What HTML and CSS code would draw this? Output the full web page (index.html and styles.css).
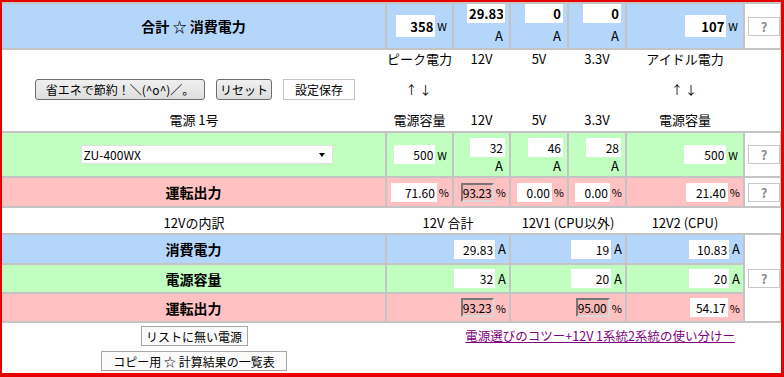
FILE: index.html
```html
<!DOCTYPE html>
<html lang="ja">
<head>
<meta charset="utf-8">
<title>電源容量計算</title>
<link rel="stylesheet" href="styles.css">
</head>
<body>
<div class="frame">
<table class="calc">
<colgroup><col class="c1"><col class="c2"><col class="c3"><col class="c4"><col class="c5"><col class="c6"><col class="c7"></colgroup>
<tr class="band blue first r1">
  <th class="lbl">合計 ☆ 消費電力</th>
  <td class="val"><input class="num b tall w39" value="358"><span class="u">W</span></td>
  <td class="amp"><input class="num b w38" value="29.83"><div class="ua">A</div></td>
  <td class="amp"><input class="num b w38" value="0"><div class="ua">A</div></td>
  <td class="amp"><input class="num b w38" value="0"><div class="ua">A</div></td>
  <td class="val"><input class="num b tall w41" value="107"><span class="u">W</span></td>
  <td class="q"><button class="qbtn">?</button></td>
</tr>
<tr class="hdr r2">
  <td></td><td>ピーク電力</td><td>12V</td><td>5V</td><td>3.3V</td><td>アイドル電力</td><td></td>
</tr>
<tr class="r3">
  <td><div class="btns"><button class="btn b1">省エネで節約！＼(^o^)／。</button><button class="btn b2">リセット</button><button class="btn flat b3">設定保存</button></div></td>
  <td class="arr">↑↓</td><td></td><td></td><td></td><td class="arr">↑↓</td><td></td>
</tr>
<tr class="hdr r4">
  <td>電源 1号</td><td>電源容量</td><td>12V</td><td>5V</td><td>3.3V</td><td>電源容量</td><td></td>
</tr>
<tr class="band green r5">
  <td><div class="selwrap"><select class="psu"><option>ZU-400WX</option></select></div></td>
  <td class="val"><input class="num w41" value="500"><span class="u">W</span></td>
  <td class="amp"><input class="num w35" value="32"><div class="ua">A</div></td>
  <td class="amp"><input class="num w35" value="46"><div class="ua">A</div></td>
  <td class="amp"><input class="num w35" value="28"><div class="ua">A</div></td>
  <td class="val"><input class="num w42" value="500"><span class="u">W</span></td>
  <td class="q"><button class="qbtn">?</button></td>
</tr>
<tr class="band pink r6">
  <th class="lbl">運転出力</th>
  <td class="pct"><input class="num w46" value="71.60"><span class="u">%</span></td>
  <td class="pct"><input class="num warn w33" value="93.23"><span class="u">%</span></td>
  <td class="pct"><input class="num w35" value="0.00"><span class="u">%</span></td>
  <td class="pct"><input class="num w35" value="0.00"><span class="u">%</span></td>
  <td class="pct"><input class="num w42" value="21.40"><span class="u">%</span></td>
  <td class="q"><button class="qbtn">?</button></td>
</tr>
<tr class="hdr r7">
  <td>12Vの内訳</td><td colspan="2">12V 合計</td><td colspan="2">12V1 (CPU以外)</td><td>12V2 (CPU)</td><td></td>
</tr>
<tr class="band blue r8">
  <th class="lbl">消費電力</th>
  <td colspan="2" class="pct"><input class="num w41" value="29.83"><span class="ua2">A</span></td>
  <td colspan="2" class="pct"><input class="num w40" value="19"><span class="ua2">A</span></td>
  <td class="pct"><input class="num w40" value="10.83"><span class="ua2">A</span></td>
  <td class="q" rowspan="3"><button class="qbtn">?</button></td>
</tr>
<tr class="band green r9">
  <th class="lbl">電源容量</th>
  <td colspan="2" class="pct"><input class="num w41" value="32"><span class="ua2">A</span></td>
  <td colspan="2" class="pct"><input class="num w40" value="20"><span class="ua2">A</span></td>
  <td class="pct"><input class="num w40" value="20"><span class="ua2">A</span></td>
</tr>
<tr class="band pink r10">
  <th class="lbl">運転出力</th>
  <td colspan="2" class="pct"><input class="num warn w33" value="93.23"><span class="u">%</span></td>
  <td colspan="2" class="pct"><input class="num warn w34" value="95.00"><span class="u">%</span></td>
  <td class="pct"><input class="num w38" value="54.17"><span class="u">%</span></td>
</tr>
<tr class="r11">
  <td><button class="btn plain b4">リストに無い電源</button></td>
  <td colspan="5" class="lnk"><a href="#">電源選びのコツー+12V 1系統2系統の使い分けー</a></td>
  <td></td>
</tr>
<tr class="r12">
  <td><button class="btn plain b5">コピー用 ☆ 計算結果の一覧表</button></td>
  <td colspan="6"></td>
</tr>
</table>
</div>
</body>
</html>
```

FILE: styles.css
```css
* { box-sizing: border-box; }
html, body { margin: 0; padding: 0; background: #fff; }
body {
  font-family: "Noto Sans CJK JP", "Noto Sans", sans-serif;
  font-size: 13px;
  color: #000;
}
.frame {
  width: 784px;
  height: 377px;
  border-style: solid;
  border-color: #e60000;
  border-width: 2px 3px 4px 2px;
  overflow: hidden;
}
.calc {
  width: 779px;
  table-layout: fixed;
  border-collapse: collapse;
}
col.c1 { width: 384px; }
col.c2 { width: 67px; }
col.c3 { width: 57px; }
col.c4 { width: 58px; }
col.c5 { width: 58px; }
col.c6 { width: 118px; }
col.c7 { width: 37px; }

.calc td, .calc th {
  padding: 0;
  text-align: center;
  vertical-align: middle;
  font-weight: normal;
  line-height: 16px;
  white-space: nowrap;
}
.band > td, .band > th { border: 2px solid #c4c4c4; }
.band > :first-child { border-left: none; }
.first > * { border-top: none; }

.blue > td, .blue > th { background: #b5d6fb; }
.green > td, .green > th { background: #c0ffc0; }
.pink > td, .pink > th { background: #ffc1c1; }
.band > td.q { background: #fff; padding: 0 1px 0 3px; }

.r1 { height: 46px; }
.r2 { height: 22px; }
.r3 { height: 38px; }
.r4 { height: 23px; }
.r5 { height: 45px; }
.r6 { height: 30px; }
.r7 { height: 27px; }
.r8 { height: 30px; }
.r9 { height: 29px; }
.r10 { height: 29px; }
.r11 { height: 26px; }
.r12 { height: 26px; }

.calc th.lbl { font-weight: bold; font-size: 14px; }
.r2 td { padding-bottom: 3px; }
.r3 td { padding-bottom: 1px; }
.r7 td { padding-top: 5px; }

.num {
  border: none;
  background: #fff;
  height: 19px;
  padding: 0 2px;
  margin: 0;
  text-align: right;
  font-family: "Noto Sans CJK JP", "Noto Sans", sans-serif;
  font-size: 12px;
  color: #000;
  vertical-align: middle;
  outline: none;
}
.num.b { font-weight: bold; font-size: 13px; }
.num.tall { height: 22px; }
.num.warn {
  background: #f6b7b7;
  border: 2px solid;
  border-color: #777 #d8d8d8 #d8d8d8 #777;
  padding: 0;
  text-align: left;
  letter-spacing: -0.3px;
}
.w33 { width: 33px; }
.w34 { width: 34px; }
.w35 { width: 35px; }
.w38 { width: 38px; }
.w39 { width: 39px; }
.w40 { width: 40px; }
.w41 { width: 41px; }
.w42 { width: 42px; }
.w46 { width: 46px; }

.u { font-size: 11px; margin-left: 2px; vertical-align: middle; }
.ua2 { font-size: 13px; margin-left: 3px; vertical-align: middle; }

.val { text-align: right !important; padding-right: 5px !important; }
.pct { text-align: right !important; padding-right: 3px !important; }
.amp { vertical-align: top !important; padding-right: 4px !important; }
.amp .num { display: block; margin-left: auto; }
.amp .ua { text-align: right; padding-right: 2px; margin-top: 5px; }
.r5 .amp { padding-top: 5px !important; }
.r5 .amp .ua { margin-top: 1px; }

.qbtn {
  display: block;
  width: 32px;
  height: 19px;
  margin: 0;
  padding: 0;
  background: #fff;
  border: 1px solid #c8c8c8;
  color: #8c8c8c;
  font-family: "Noto Sans CJK JP", sans-serif;
  font-size: 13px;
  font-weight: bold;
  line-height: 17px;
}

.btns { display: flex; justify-content: center; gap: 11px; padding-left: 2px; }
.btn {
  height: 21px;
  margin: 0;
  padding: 0;
  font-family: "Noto Sans CJK JP", sans-serif;
  font-size: 12px;
  line-height: 19px;
  color: #000;
  border: 1px solid #6e6e6e;
  border-radius: 3px;
  background: linear-gradient(#f0f0f0, #dedede);
}
.btn.flat { background: #fff; border-color: #c4c4c4; border-radius: 0; }
.btn.plain { background: #fbfbfb; border-color: #a6a6a6; border-radius: 0; height: 20px; }
.b1 { width: 170px; }
.b2 { width: 56px; }
.b3 { width: 72px; }
.b4 { width: 107px; }
.b5 { width: 186px; }

.arr { font-size: 12px; letter-spacing: 2px; }

.selwrap {
  position: relative;
  width: 252px;
  margin: 0 auto;
  left: 13px;
}
.psu {
  display: block;
  width: 252px;
  height: 19px;
  margin: 0;
  padding: 0 2px;
  appearance: none;
  -webkit-appearance: none;
  background: #fff;
  border: 1px solid #e0e0e0;
  border-radius: 0;
  font-family: "Noto Sans CJK JP", sans-serif;
  font-size: 12px;
  color: #000;
}
.selwrap::after {
  content: "";
  position: absolute;
  right: 8px;
  top: 8px;
  border-left: 3px solid transparent;
  border-right: 3px solid transparent;
  border-top: 4px solid #000;
}

.lnk { text-align: right !important; padding-right: 9px !important; }
.lnk a { color: #800080; font-size: 12.5px; }
.r11 td { vertical-align: middle; }
```
